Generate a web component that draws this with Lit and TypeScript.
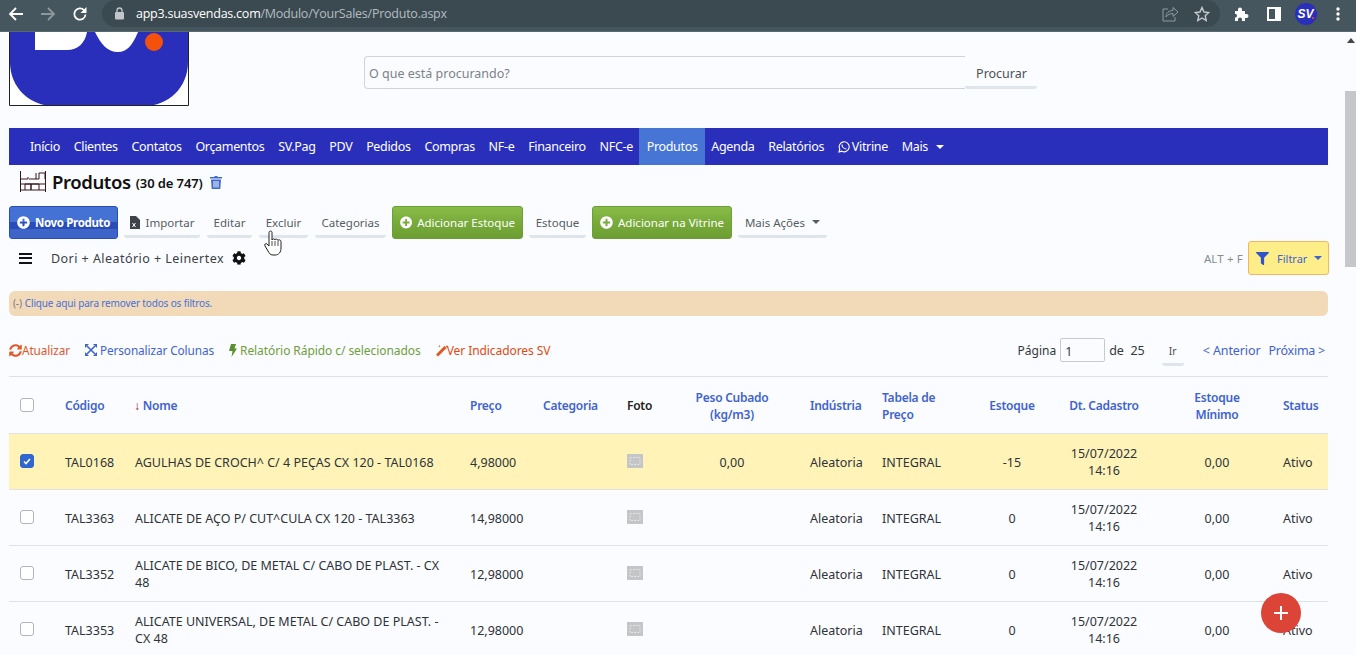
import { LitElement, html, css, svg } from "lit";
import { customElement } from "lit/decorators.js";

const NAV = ["Início","Clientes","Contatos","Orçamentos","SV.Pag","PDV","Pedidos","Compras","NF-e","Financeiro","NFC-e","Produtos","Agenda","Relatórios"];
const ROWS = [
  { c:"TAL0168", n:"AGULHAS DE CROCH^ C/ 4 PEÇAS CX 120 - TAL0168", p:"4,98000", w:"0,00", e:"-15", sel:true },
  { c:"TAL3363", n:"ALICATE DE AÇO P/ CUT^CULA CX 120 - TAL3363", p:"14,98000", w:"", e:"0", sel:false },
  { c:"TAL3352", n:"ALICATE DE BICO, DE METAL C/ CABO DE PLAST. - CX 48", p:"12,98000", w:"", e:"0", sel:false },
  { c:"TAL3353", n:"ALICATE UNIVERSAL, DE METAL C/ CABO DE PLAST. - CX 48", p:"12,98000", w:"", e:"0", sel:false },
];
const plusCircle = svg`<svg class="ic" viewBox="0 0 512 512" width="13" height="13"><path fill="currentColor" d="M256 8C119 8 8 119 8 256s111 248 248 248 248-111 248-248S393 8 256 8zm144 276c0 6.600-5.400 12-12 12h-92v92c0 6.600-5.400 12-12 12h-56c-6.600 0-12-5.400-12-12v-92h-92c-6.600 0-12-5.400-12-12v-56c0-6.600 5.400-12 12-12h92v-92c0-6.600 5.400-12 12-12h56c6.600 0 12 5.400 12 12v92h92c6.600 0 12 5.400 12 12z"/></svg>`;

@customElement("app-root")
export class AppRoot extends LitElement {
  static styles = css`
    :host { display:block; width:1356px; height:655px; overflow:hidden; position:relative; background:#fbfcff;
      font-family:"Noto Sans","Open Sans",sans-serif; font-size:12px; color:#33383d; }
    * { box-sizing:border-box; }
    .chrome { height:32px; background:#46565e; display:flex; align-items:flex-start; border-bottom:1px solid #5a686f; }
    .tb { width:32px; height:27px; display:flex; align-items:center; justify-content:center; flex:none; }
    .navbtns { display:flex; width:102px; }
    .pill { width:1118px; height:27px; background:#3b4a51; border-radius:14px; display:flex; align-items:center; padding:0 2px 0 12px; flex:none; }
    .url { font-size:12.500px; color:#b4bcc0; margin-left:11px; white-space:nowrap; font-family:"Open Sans",sans-serif; letter-spacing:-.24px; }
    .url b { font-weight:400; color:#fff; }
    .grow { flex:1; }
    .right { display:flex; margin-left:6px; }
    .page { height:623px; display:flex; }
    main { width:1345px; padding:0 17px 0 9px; flex:none; overflow:hidden; }
    .bar { width:11px; flex:none; display:flex; flex-direction:column; align-items:center; background:#fbfcff; }
    .arrow { width:0; height:0; border:4px solid transparent; border-top:0; border-bottom:5px solid #444; margin-top:6px; }
    .thumb { width:11px; height:176px; background:#c6c7cb; margin-top:48px; }
    .hdr { height:96px; display:flex; align-items:flex-start; }
    .logo { width:180px; height:74px; flex:none; display:block; }
    .search { margin:24px 0 0 175px; display:flex; }
    .input { width:601px; height:33px; border:1px solid #ced4da; border-radius:4px 0 0 4px; padding-left:4px; color:#7b8288; font-size:12.500px; display:flex; align-items:center; border-right:0; padding-top:2px; }
    .ghost { border-bottom:3px solid #dee6ec; border-radius:3px; }
    .procurar { width:72px; height:33px; display:flex; align-items:center; justify-content:center; font-size:12.500px; color:#4b5157; padding:5px 0 0 1px; }
    nav { height:37px; background:#2a2fbb; display:flex; padding-left:14px; color:#fff; font-size:12.500px; letter-spacing:-.33px; align-items:stretch; }
    nav a { display:flex; align-items:center; padding:0 6.900px; white-space:nowrap; gap:2px; }
    nav a.on { background:#4675d6; padding:0 7.400px; margin:0 -.5px; }
    .caret { display:inline-block; width:0; height:0; border:4px solid transparent; border-top:4px solid currentColor; border-bottom:0; margin-left:6px; }
    .title { height:41px; display:flex; align-items:center; padding:0 0 8px 11px; color:#111; }
    .title h1 { font-size:18.500px; font-weight:600; margin:0 0 0 6px; letter-spacing:-.4px; }
    .title small { font-size:13px; font-weight:600; margin-left:5px; letter-spacing:-.1px; padding-top:2px; }
    .title .trash { margin-left:7px; color:#3f6bd0; }
    .actions { display:flex; height:33px; gap:6px; align-items:stretch; font-size:11.500px; color:#555c63; }
    .btn { display:flex; align-items:center; gap:5px; padding:0 7px; border-radius:3px; color:#fff; white-space:nowrap; }
    .btn.blue { width:109px; font-weight:700; background:linear-gradient(#4472d4 0,#4472d4 48%,#2a4cb8 48%,#2a4cb8 72%,#3d65c8 72%,#3d65c8 100%); border:1px solid #2a4cb8; letter-spacing:-.35px; }
    .btn.green { background:linear-gradient(#88bb46,#78ab3a 50%,#6c9e33); border:1px solid #6d9e38; }
    .act { display:flex; align-items:center; justify-content:center; gap:6px; white-space:nowrap; height:32px; padding-top:3px; }
    .act.wide { margin-left:1px; }
    .filters { height:36px; margin-top:1px; display:flex; align-items:center; font-size:12.500px; color:#3a4046; }
    .ham { width:13px; margin:0 19px 0 10px; display:flex; flex-direction:column; gap:2.500px; }
    .ham i { height:2px; background:#111; display:block; }
    .dori { letter-spacing:.45px; }
    .gear { margin-left:8px; }
    .alt { margin-left:auto; color:#868d93; font-size:11.500px; margin-right:5px; letter-spacing:.15px; }
    .filtrar { width:81px; height:34px; margin-right:-1px; background:#fdee8a; border:1px solid #f3b65e; border-radius:3px; display:flex; align-items:center; padding-left:7px; gap:8px; color:#3f63cf; font-size:11px; flex:none; }
    .filtrar .caret { margin-left:-1px; }
    .alert { margin-top:15px; height:25px; background:#f2d9b8; border-radius:6px; display:flex; align-items:center; padding:0 0 1px 4px; font-size:10px; letter-spacing:-.15px; color:#4672d8; }
    .alert span { color:#6f7a88; margin-right:3px; }
    .links { height:61px; padding-top:8px; display:flex; align-items:center; font-size:11.800px; border-bottom:1px solid #dee2e6; letter-spacing:-.1px; }
    .links a { display:flex; align-items:center; white-space:nowrap; }
    .rel { font-size:12px; letter-spacing:-.07px; margin-left:15px; }
    .o { color:#e4572a; } .b { color:#3f63cf; } .g { color:#6f9f3c; }
    .pager { margin-left:auto; display:flex; align-items:center; color:#33383d; font-size:12.500px; letter-spacing:0; }
    .pager a { font-size:12.500px; }
    .lbl { font-size:12px; }
    .next { margin:0 3px 0 8px; letter-spacing:-.25px; }
    .prev { letter-spacing:-.1px; }
    .pg { width:45px; height:24px; border:1px solid #c6cbd0; border-radius:2px; margin:0 4px; padding:4px 0 0 4px; line-height:17px; }
    .ir { width:22px; height:27px; display:flex; align-items:center; justify-content:center; margin:4px 19px 0 17px; font-size:10.500px; color:#4b5157; padding-top:1px; }
    table { border-collapse:collapse; table-layout:fixed; width:1319px; font-size:12.500px; color:#2e3338; }
    th { height:56px; color:#3f63cf; font-size:12px; font-weight:600; text-align:left; padding:2px 10px 0; line-height:17px; border-bottom:1px solid #dee2e6; letter-spacing:-.25px; white-space:nowrap; }
    td { height:56px; padding:2px 10px 0; line-height:17px; border-bottom:1px solid #dee2e6; }
    .c { text-align:center; padding:2px 0 0; }
    tr.sel td { background:#fff3b8; }
    .cb { width:14px; height:14px; border:1px solid #b0b5ba; border-radius:3px; margin:-2px 0 0 1px; background:#fff; display:flex; align-items:center; justify-content:center; }
    .cb.on { background:#2f66d0; border-color:#2f66d0; }
    .ph { display:block; width:16px; height:14px; margin-top:-2px; }
    .arrowd { color:#8c1c22; font-weight:400; margin:0 3px 0 -1px; }
    .fab { position:absolute; left:1261px; top:593px; width:40px; height:40px; border-radius:50%; background:#db4437; display:flex; align-items:center; justify-content:center; }
    .hand { position:absolute; left:264px; top:230px; }
  `;

  render() {
    return html`
      <div class="chrome">
        <div class="navbtns">
          <div class="tb"><svg width="16" height="16" viewBox="0 0 16 16"><path d="M15 8H2M8 2 2 8l6 6" fill="none" stroke="#fff" stroke-width="1.800"/></svg></div>
          <div class="tb"><svg width="16" height="16" viewBox="0 0 16 16"><path d="M1 8h13M8 2l6 6-6 6" fill="none" stroke="#8d989d" stroke-width="1.800"/></svg></div>
          <div class="tb"><svg width="16" height="16" viewBox="0 0 16 16"><path d="M13.500 8.500A5.600 5.600 0 1 1 12 4.200" fill="none" stroke="#fff" stroke-width="1.800"/><path d="M14.500 1v6h-6z" fill="#fff"/></svg></div>
        </div>
        <div class="pill">
          <svg width="11" height="13" viewBox="0 0 11 13"><rect x="1" y="5" width="9" height="7.500" rx="1" fill="#c0c6c9"/><path d="M3 5V3.500a2.500 2.500 0 0 1 5 0V5" fill="none" stroke="#c0c6c9" stroke-width="1.300"/></svg>
          <span class="url"><b>app3.suasvendas.com</b>/Modulo/YourSales/Produto.aspx</span>
          <span class="grow"></span>
          <div class="tb"><svg width="17" height="16" viewBox="0 0 17 16"><path d="M6 3H1v12h12v-4" fill="none" stroke="#8f9a9f" stroke-width="1"/><path d="M4 11c0-4 3-6.500 7-6.500V1.500L16 6l-5 4.500V7.500c-3 0-5 1-7 3.500z" fill="none" stroke="#8f9a9f" stroke-width="1"/></svg></div>
          <div class="tb"><svg width="16" height="16" viewBox="0 0 16 16"><path d="M8 1.500l2 4.500 4.800.5-3.600 3.200 1 4.800L8 12l-4.200 2.500 1-4.800L1.200 6.500 6 6z" fill="none" stroke="#c5cacc" stroke-width="1.400"/></svg></div>
        </div>
        <div class="right">
          <div class="tb"><svg width="16" height="16" viewBox="0 0 16 16"><path d="M1 5h3V3.500a2 2 0 0 1 4 0V5h3v3h1.500a2 2 0 0 1 0 4H11v3H8v-1.500a2 2 0 0 0-4 0V15H1v-3.500h1a2 2 0 0 0 0-3.500H1z" fill="#fff"/></svg></div>
          <div class="tb"><svg width="14" height="14" viewBox="0 0 14 14"><path fill="#fff" fill-rule="evenodd" d="M0 0h14v14H0zM2 2v10h6V2z"/></svg></div>
          <div class="tb"><svg width="22" height="22" viewBox="0 0 22 22"><circle cx="11" cy="11" r="11" fill="#2a2fbb"/><text x="2.500" y="15" font-size="12" font-weight="700" font-style="italic" font-family="Liberation Sans" fill="#fff">SV</text><circle cx="18" cy="15" r="1" fill="#e4572a"/></svg></div>
          <div class="tb"><svg width="4" height="14" viewBox="0 0 4 14"><circle cx="2" cy="2" r="1.700" fill="#fff"/><circle cx="2" cy="7" r="1.700" fill="#fff"/><circle cx="2" cy="12" r="1.700" fill="#fff"/></svg></div>
        </div>
      </div>
      <div class="page">
        <main>
          <div class="hdr">
            <svg class="logo" viewBox="0 0 180 74">
              <rect width="180" height="74" fill="#fff"/>
              <path d="M1 0h178v30c0 26-20 44-44 44H45C21 74 1 56 1 30z" fill="#2a2fbb"/>
              <path d="M26 0h52c-2 11-9 18-20 18H26zM86 0h43c-6 14-11 20-20 20C98 20 92 12 86 0z" fill="#fff"/>
              <circle cx="145" cy="10" r="9" fill="#f4520c"/>
              <path d="M.500 0v73.500h179V0" fill="none" stroke="#222"/>
            </svg>
            <div class="search">
              <div class="input">O que está procurando?</div>
              <div class="procurar ghost">Procurar</div>
            </div>
          </div>
          <nav>
            ${NAV.map(n => html`<a class=${n === "Produtos" ? "on" : ""}>${n}</a>`)}
            <a><svg width="12" height="12" viewBox="0 0 12 12"><path d="M1 11l.8-2.800A5 5 0 1 1 3.800 10.200z" fill="none" stroke="#fff" stroke-width="1.100"/><path d="M4 3.500c0 2.500 2 4.500 4.500 4.500" fill="none" stroke="#fff" stroke-width="1.200"/></svg>Vitrine</a>
            <a>Mais<span class="caret"></span></a>
          </nav>
          <div class="title">
            <svg width="26" height="21" viewBox="0 0 26 21"><path d="M.500 0v21M25.500 0v21M0 8h8V6M0 19h26M0 13h26M5 19v-6h6v6M11 19v-6h8v6M9 8h10V2h6v6M16 2v6" fill="none" stroke="#3a1518" stroke-width="1"/></svg>
            <h1>Produtos</h1><small>(30 de 747)</small>
            <svg class="trash" width="12" height="14" viewBox="0 0 12 14"><path fill="currentColor" d="M0 2h4l1-1h2l1 1h4v1.500H0zM1 4.500h10L10.300 14H1.700zM3.500 6v6.500h1V6zM5.500 6v6.500h1V6zM7.500 6v6.500h1V6z" fill-rule="evenodd"/></svg>
          </div>
          <div class="actions">
            <div class="btn blue">${plusCircle}Novo Produto</div>
            <div class="act ghost" style="width:76px"><svg width="10" height="13" viewBox="0 0 10 13"><path fill="#3d4348" d="M0 0h6l4 4v9H0z"/><path d="M2.500 7l3 4M5.500 7l-3 4" stroke="#fff" stroke-width="1"/></svg>Importar</div>
            <div class="act ghost wide" style="width:45px">Editar</div>
            <div class="act ghost wide" style="width:49px">Excluir</div>
            <div class="act ghost wide" style="width:71px">Categorias</div>
            <div class="btn green" style="width:131px">${plusCircle}Adicionar Estoque</div>
            <div class="act ghost" style="width:57px">Estoque</div>
            <div class="btn green" style="width:140px">${plusCircle}Adicionar na Vitrine</div>
            <div class="act ghost" style="width:89px">Mais Ações<span class="caret" style="margin-left:1px"></span></div>
          </div>
          <div class="filters">
            <div class="ham"><i></i><i></i><i></i></div>
            <span class="dori">Dori + Aleatório + Leinertex</span>
            <svg class="gear" width="14" height="14" viewBox="0 0 512 512"><path fill="#111" d="M487.400 315.700l-42.600-24.600c4.300-23.200 4.300-47 0-70.200l42.600-24.600c4.900-2.800 7.100-8.600 5.500-14-11.100-35.600-30-67.800-54.700-94.600-3.800-4.100-10-5.100-14.800-2.300L380.800 110c-17.900-15.400-38.500-27.300-60.800-35.100V25.800c0-5.600-3.900-10.500-9.400-11.700-36.700-8.200-74.300-7.800-109.200 0-5.500 1.200-9.400 6.100-9.400 11.700V75c-22.200 7.900-42.800 19.800-60.800 35.100L88.700 85.500c-4.900-2.800-11-1.900-14.800 2.300-24.700 26.700-43.600 58.900-54.700 94.600-1.700 5.400.6 11.200 5.500 14L67.300 221c-4.300 23.200-4.300 47 0 70.200l-42.600 24.600c-4.900 2.800-7.100 8.600-5.500 14 11.100 35.600 30 67.800 54.700 94.600 3.800 4.100 10 5.100 14.800 2.300l42.600-24.600c17.900 15.400 38.500 27.300 60.800 35.100v49.200c0 5.600 3.900 10.500 9.400 11.700 36.700 8.200 74.300 7.800 109.200 0 5.500-1.200 9.400-6.100 9.400-11.700v-49.200c22.200-7.900 42.800-19.800 60.800-35.100l42.600 24.600c4.900 2.800 11 1.900 14.800-2.300 24.700-26.700 43.600-58.900 54.700-94.600 1.500-5.500-.7-11.300-5.600-14.100zM256 336c-44.100 0-80-35.900-80-80s35.900-80 80-80 80 35.900 80 80-35.900 80-80 80z"/></svg>
            <span class="alt">ALT + F</span>
            <div class="filtrar"><svg width="13" height="13" viewBox="0 0 512 512"><path fill="#2f55c8" d="M487.976 0H24.028C2.710 0-8.047 25.866 7.058 40.971L192 225.941V432c0 7.831 3.821 15.170 10.237 19.662l80 55.980C298.020 518.690 320 507.493 320 487.980V225.941l184.947-184.970C520.021 25.896 509.338 0 487.976 0z"/></svg>Filtrar<span class="caret"></span></div>
          </div>
          <div class="alert"><span>(-)</span>Clique aqui para remover todos os filtros.</div>
          <div class="links">
            <a class="o"><svg width="13" height="13" viewBox="0 0 512 512"><path fill="#e4572a" d="M370.720 133.280C339.458 104.008 298.888 87.962 255.848 88c-77.458.068-144.328 53.178-162.791 126.850-1.344 5.363-6.122 9.150-11.651 9.150H24.103c-7.498 0-13.194-6.807-11.807-14.176C33.933 94.924 134.813 8 256 8c66.448 0 126.791 26.136 171.315 68.685L463.030 40.970C478.149 25.851 504 36.559 504 57.941V192c0 13.255-10.745 24-24 24H345.941c-21.382 0-32.090-25.851-16.971-40.971l41.750-41.749zM32 296h134.059c21.382 0 32.090 25.851 16.971 40.971l-41.750 41.750c31.262 29.273 71.835 45.319 114.876 45.280 77.418-.070 144.315-53.144 162.787-126.849 1.344-5.363 6.122-9.150 11.651-9.150h57.304c7.498 0 13.194 6.807 11.807 14.176C478.067 417.076 377.187 504 256 504c-66.448 0-126.791-26.136-171.315-68.685L48.970 471.030C33.851 486.149 8 475.441 8 454.059V320c0-13.255 10.745-24 24-24z"/></svg>Atualizar</a>
            <a class="b" style="margin-left:15px"><svg width="12" height="12" viewBox="0 0 12 12" style="margin-right:3px"><path d="M2 2l8 8M10 2l-8 8" stroke="#3f63cf" stroke-width="1.600"/><path d="M0 0h4L0 4zM12 0v4L8 0zM0 12V8l4 4zM12 12H8l4-4z" fill="#3f63cf"/></svg>Personalizar Colunas</a>
            <a class="g rel"><svg width="8" height="13" viewBox="0 0 8 13" style="margin-right:3px"><path d="M2 0h5L5.500 4.500H8L2.500 13 3.500 7H0z" fill="#5a8f2e"/></svg>Relatório Rápido c/ selecionados</a>
            <a class="o rel" style="color:#e24a12"><svg width="13" height="13" viewBox="0 0 13 13" style="margin-right:-2px"><path d="M1 11.500 9.500 3" stroke="#e05a1c" stroke-width="3"/><path d="M11 1l.5 1 1 .5-1 .5-.5 1-.5-1-1-.5 1-.5zM3.500 1l.4.800.8.400-.8.400-.4.800-.4-.8-.8-.4.800-.4z" fill="#e05a1c"/></svg>Ver Indicadores SV</a>
            <div class="pager"><span class="lbl">Página</span><span class="pg">1</span>de&nbsp; 25<span class="ir ghost">Ir</span><a class="b prev">&lt; Anterior</a><a class="b next">Próxima &gt;</a></div>
          </div>
          <table>
            <colgroup>${[46,70,335,73,84,47,136,72,105,70,114,112,55].map(w => html`<col style="width:${w}px">`)}</colgroup>
            <thead><tr>
              <th><div class="cb"></div></th><th>Código</th><th><span class="arrowd">↓</span>Nome</th><th>Preço</th><th>Categoria</th><th style="color:#222">Foto</th>
              <th class="c">Peso Cubado<br>(kg/m3)</th><th>Indústria</th><th>Tabela de<br>Preço</th><th class="c">Estoque</th><th class="c">Dt. Cadastro</th><th class="c">Estoque<br>Mínimo</th><th>Status</th>
            </tr></thead>
            <tbody>
              ${ROWS.map(r => html`<tr class=${r.sel ? "sel" : ""}>
                <td><div class="cb ${r.sel ? "on" : ""}">${r.sel ? html`<svg width="8" height="7" viewBox="0 0 8 7"><path d="M1 3.500 3 5.500 7 1" fill="none" stroke="#fff" stroke-width="1.600"/></svg>` : ""}</div></td>
                <td>${r.c}</td><td>${r.n}</td><td>${r.p}</td><td></td><td><svg class="ph" viewBox="0 0 16 14"><rect width="16" height="14" fill="#c4c5c7"/><path d="M3 3.500h10v7H3z" fill="none" stroke="#e2e3e4" stroke-width="1" stroke-dasharray="2 1"/></svg></td>
                <td class="c">${r.w}</td><td>Aleatoria</td><td>INTEGRAL</td><td class="c">${r.e}</td><td class="c">15/07/2022<br>14:16</td><td class="c">0,00</td><td>Ativo</td>
              </tr>`)}
            </tbody>
          </table>
        </main>
        <div class="bar"><div class="arrow"></div><div class="thumb"></div></div>
      </div>
      <div class="fab"><svg width="14" height="14" viewBox="0 0 14 14"><path d="M7 0v14M0 7h14" stroke="#fff" stroke-width="2"/></svg></div>
      <svg class="hand" width="20" height="27" viewBox="0 0 20 27"><path d="M5 2.500c0-2 3-2 3 0V10c0-1.500 3-1.500 3 0 0-1.200 3-1.200 3 .5 .2-1 3-1 3 1V18c0 4-2 7-6 7H9c-3 0-4-2-5-4l-3-5c-1-2 1-3 2-2l2 2z" fill="#fff" stroke="#222" stroke-width="1"/><path d="M8 11v5M11 11v5M14 11v5" stroke="#222" stroke-width=".8"/></svg>
    `;
  }
}
